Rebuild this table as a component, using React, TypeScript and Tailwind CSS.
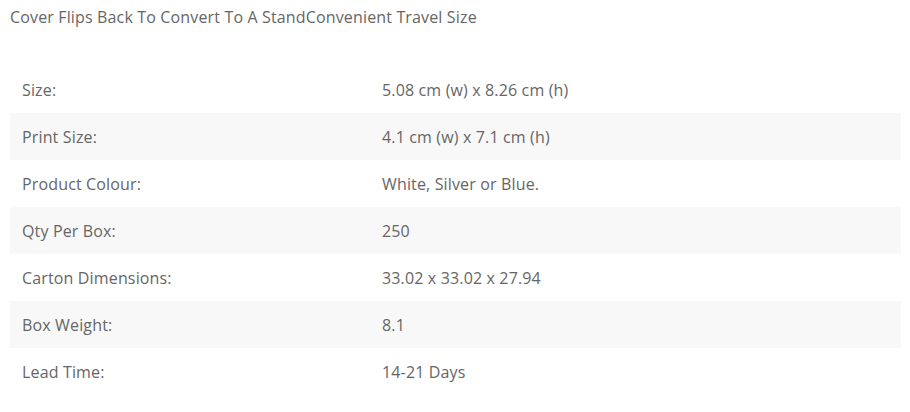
const rows: [string, string][] = [
  ['Size:', '5.08 cm (w) x 8.26 cm (h)'],
  ['Print Size:', '4.1 cm (w) x 7.1 cm (h)'],
  ['Product Colour:', 'White, Silver or Blue.'],
  ['Qty Per Box:', '250'],
  ['Carton Dimensions:', '33.02 x 33.02 x 27.94'],
  ['Box Weight:', '8.1'],
  ['Lead Time:', '14-21 Days'],
]

export default function App() {
  return (
    <div className="w-[910px] h-[412px] bg-white px-[10px] pt-[5px] text-[16px] tracking-[0.15px] leading-6 text-[#666] font-['Open_Sans',sans-serif] overflow-hidden">
      <p>Cover Flips Back To Convert To A StandConvenient Travel Size</p>
      <table className="mt-[37px] w-[891px] border-collapse">
        <tbody>
          {rows.map(([k, v], i) => (
            <tr key={k} className={i % 2 === 1 ? 'bg-[#f8f8f8]' : ''}>
              <td className="w-[360px] h-[47px] px-3 align-middle">{k}</td>
              <td className="h-[47px] px-3 align-middle">{v}</td>
            </tr>
          ))}
        </tbody>
      </table>
    </div>
  )
}
